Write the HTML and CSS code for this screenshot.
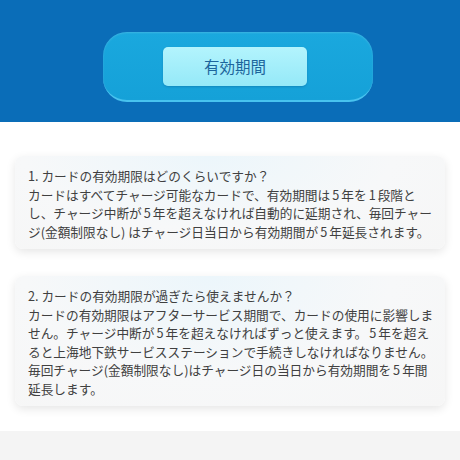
FILE: index.html
```html
<!DOCTYPE html>
<html lang="ja">
<head>
  <meta charset="UTF-8" />
  <meta name="viewport" content="width=device-width, initial-scale=1.0"/>
  <title>有効期間</title>
  <link rel="stylesheet" href="styles.css">
</head>
<body>
  <div class="header">
    <div class="pill">
      <button class="tab">有効期間</button>
    </div>
  </div>

  <div class="faq">
    <div class="card">
      <p>1. カードの有効期限はどのくらいですか？</p>
      <p>カードはすべてチャージ可能なカードで、有効期間は<span class="num">5</span>年を<span class="num">1</span>段階とし、チャージ中断が<span class="num">5</span>年を超えなければ自動的に延期され、毎回チャージ(金額制限なし) はチャージ日当日から有効期間が<span class="num">5</span>年延長されます。</p>
    </div>

    <div class="card">
      <p>2. カードの有効期限が過ぎたら使えませんか？</p>
      <p>カードの有効期限はアフターサービス期間で、カードの使用に影響しません。チャージ中断が<span class="num">5</span>年を超えなければずっと使えます。<span class="num">5</span>年を超えると上海地下鉄サービスステーションで手続きしなければなりません。毎回チャージ(金額制限なし)はチャージ日の当日から有効期間を<span class="num">5</span>年間延長します。</p>
    </div>
  </div>

  <div class="footer"></div>
</body>
</html>
```

FILE: styles.css
```css
body {
  margin: 0;
  height: 460px;
  overflow: hidden;
  background-color: #ffffff;
  font-family: 'Noto Sans CJK JP', 'Noto Sans', sans-serif;
  display: flex;
  flex-direction: column;
}
.header {
  height: 122px;
  box-sizing: border-box;
  padding: 32px 0 0 16px;
  background-color: #0a6db8;
  display: flex;
  justify-content: center;
  align-items: flex-start;
}
.pill {
  width: 270px;
  height: 70px;
  box-sizing: border-box;
  border-radius: 24px;
  background: linear-gradient(180deg, #1aa8de 0%, #15a1d8 100%);
  border-bottom: 2px solid #48c3ef;
  box-shadow: inset 0 1px 2px rgba(255, 255, 255, 0.15);
  display: flex;
  justify-content: center;
  align-items: center;
}
.tab {
  width: 144px;
  height: 39px;
  margin: 0 6px 0 0;
  border: none;
  border-radius: 5px;
  background: linear-gradient(180deg, #b3f4fd 0%, #95e9f8 100%);
  box-shadow: 0 1px 2px rgba(0, 60, 110, 0.25);
  color: #1c659c;
  font-family: 'Noto Sans CJK JP', sans-serif;
  font-size: 15.5px;
  padding: 0;
}
.faq {
  padding: 34px 15px 0 15px;
  display: flex;
  flex-direction: column;
  gap: 27px;
}
.card {
  padding: 11px 10px 8px 13px;
  border-radius: 8px;
  background: radial-gradient(ellipse at 45% 0%, #ecf6fb 0%, #f7f8f9 55%, #f6f6f6 100%);
  box-shadow: 0 3px 10px rgba(0, 0, 0, 0.10);
  color: #404040;
  font-size: 12.7px;
  line-height: 18.5px;
}
.card p {
  margin: 0;
}
.num {
  margin: 0 2px;
}
.footer {
  margin-top: auto;
  height: 29px;
  background-color: #f4f4f4;
}
```
